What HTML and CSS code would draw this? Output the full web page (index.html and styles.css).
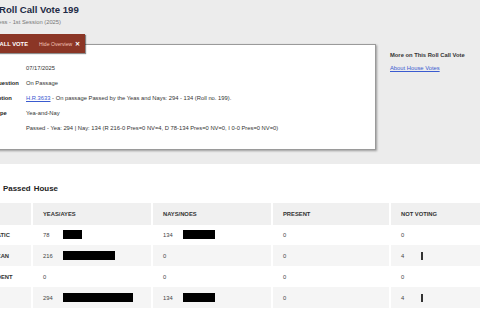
FILE: index.html
```html
<!DOCTYPE html>
<html lang="en">

<head>
    <meta charset="UTF-8">
    <meta name="viewport" content="width=device-width, initial-scale=1.0">
    <title>Roll Call Vote 199</title>
    <link rel="stylesheet" href="styles.css">
</head>

<body>
    <div class="overview">
        <div class="wrap">
            <h1 class="title">House Roll Call Vote 199</h1>
            <p class="session">119th Congress - 1st Session (2025)</p>
            <div class="ov-row">
                <div class="card">
                    <div class="tab">
                        <span class="tab-name">ROLL CALL VOTE</span>
                        <span class="tab-hide">Hide Overview <b>&#x2715;</b></span>
                    </div>
                    <div class="facts">
                        <span class="lbl">Date</span><span>07/17/2025</span>
                        <span class="lbl">Vote Question</span><span>On Passage</span>
                        <span class="lbl">Description</span><span><a href="#">H.R.3633</a> - On passage Passed by the Yeas and Nays: 294 - 134 (Roll no. 199).</span>
                        <span class="lbl">Vote Type</span><span>Yea-and-Nay</span>
                        <span class="lbl">Result</span><span>Passed - Yea: 294 | Nay: 134 (R 216-0 Pres=0 NV=4, D 78-134 Pres=0 NV=0, I 0-0 Pres=0 NV=0)</span>
                    </div>
                </div>
                <aside class="more">
                    <p class="more-head">More on This Roll Call Vote</p>
                    <a class="more-link" href="#">About House Votes</a>
                </aside>
            </div>
        </div>
    </div>

    <div class="results">
        <div class="wrap">
            <h2 class="res-title">Passed House</h2>
            <div class="votes">
                <div class="cell head">PARTY</div>
                <div class="cell head">YEAS/AYES</div>
                <div class="cell head">NAYS/NOES</div>
                <div class="cell head">PRESENT</div>
                <div class="cell head">NOT VOTING</div>

                <div class="cell party">DEMOCRATIC</div>
                <div class="cell"><span class="num">78</span><span class="bar" style="width:19px"></span></div>
                <div class="cell"><span class="num">134</span><span class="bar" style="width:32px"></span></div>
                <div class="cell"><span class="num">0</span></div>
                <div class="cell"><span class="num">0</span></div>

                <div class="cell party alt">REPUBLICAN</div>
                <div class="cell alt"><span class="num">216</span><span class="bar" style="width:52px"></span></div>
                <div class="cell alt"><span class="num">0</span></div>
                <div class="cell alt"><span class="num">0</span></div>
                <div class="cell alt"><span class="num">4</span><span class="bar thin"></span></div>

                <div class="cell party">INDEPENDENT</div>
                <div class="cell"><span class="num">0</span></div>
                <div class="cell"><span class="num">0</span></div>
                <div class="cell"><span class="num">0</span></div>
                <div class="cell"><span class="num">0</span></div>

                <div class="cell party alt">TOTALS</div>
                <div class="cell alt"><span class="num">294</span><span class="bar" style="width:70px"></span></div>
                <div class="cell alt"><span class="num">134</span><span class="bar" style="width:32px"></span></div>
                <div class="cell alt"><span class="num">0</span></div>
                <div class="cell alt"><span class="num">4</span><span class="bar thin"></span></div>
            </div>
        </div>
    </div>
</body>

</html>
```

FILE: styles.css
```css
* {
    box-sizing: border-box;
}

body {
    margin: 0;
    overflow: hidden;
    background: #ffffff;
    font-family: "Liberation Sans", Arial, sans-serif;
    font-size: 5.8px;
    color: #333333;
}

.wrap {
    margin-left: -33px;
}

/* top overview band */
.overview {
    background: #ececec;
    padding: 3px 0 14px;
}

.title {
    margin: 0;
    font-size: 9.6px;
    line-height: 14px;
    color: #1e2a45;
}

.session {
    margin: 1px 0 0;
    line-height: 8px;
    color: #777777;
}

.ov-row {
    display: flex;
    margin-top: 18px;
}

.card {
    position: relative;
    flex: none;
    width: 409px;
    background: #ffffff;
    border: 1px solid #9a9a9a;
    box-shadow: 1px 1px 2px rgba(0, 0, 0, 0.35);
    padding: 16px 12px 13px 12px;
}

.tab {
    position: absolute;
    top: -11px;
    left: -1px;
    width: 118px;
    height: 19px;
    display: flex;
    align-items: center;
    padding-left: 11px;
    white-space: nowrap;
    background: #8b3626;
    box-shadow: 1px 1px 1px rgba(0, 0, 0, 0.45);
}

.tab-name {
    font-weight: bold;
    color: #ffffff;
}

.tab-hide {
    margin-left: 11px;
    font-size: 5.1px;
    color: #f2c4b8;
}

.tab-hide b {
    margin-left: 1px;
    font-size: 6.4px;
    color: #ffffff;
}

.facts {
    display: grid;
    grid-template-columns: 46px 1fr;
    line-height: 15px;
    white-space: nowrap;
}

.lbl {
    font-weight: bold;
    color: #222222;
}

.facts a,
.more-link {
    color: #3a5bd0;
}

.more {
    margin-left: 14px;
    padding-top: 6px;
    white-space: nowrap;
}

.more-head {
    margin: 0;
    line-height: 10px;
    font-weight: bold;
    color: #333333;
}

.more-link {
    display: block;
    margin-top: 3px;
    line-height: 10px;
}

/* results table */
.res-title {
    margin: 19px 0 8px;
    padding-left: 36px;
    font-size: 7.9px;
    line-height: 12px;
    word-spacing: 1px;
    color: #222222;
}

.votes {
    display: grid;
    grid-template-columns: 71px 118px 118px 116px 1fr;
    grid-auto-rows: 21px;
    column-gap: 2px;
    margin-left: -7px;
}

.cell {
    display: flex;
    align-items: center;
    padding-left: 10px;
    color: #444444;
    white-space: nowrap;
}

.head {
    height: 22px;
    background: #f0f0f0;
    font-weight: bold;
    color: #333333;
}

.party {
    padding-left: 11px;
    font-weight: bold;
    color: #333333;
}

.alt {
    background: #f5f5f5;
}

.num {
    display: inline-block;
    min-width: 20px;
}

.bar {
    display: inline-block;
    height: 9px;
    background: #000000;
}

.bar.thin {
    width: 1.5px;
    height: 8px;
    background: #333333;
}
```
